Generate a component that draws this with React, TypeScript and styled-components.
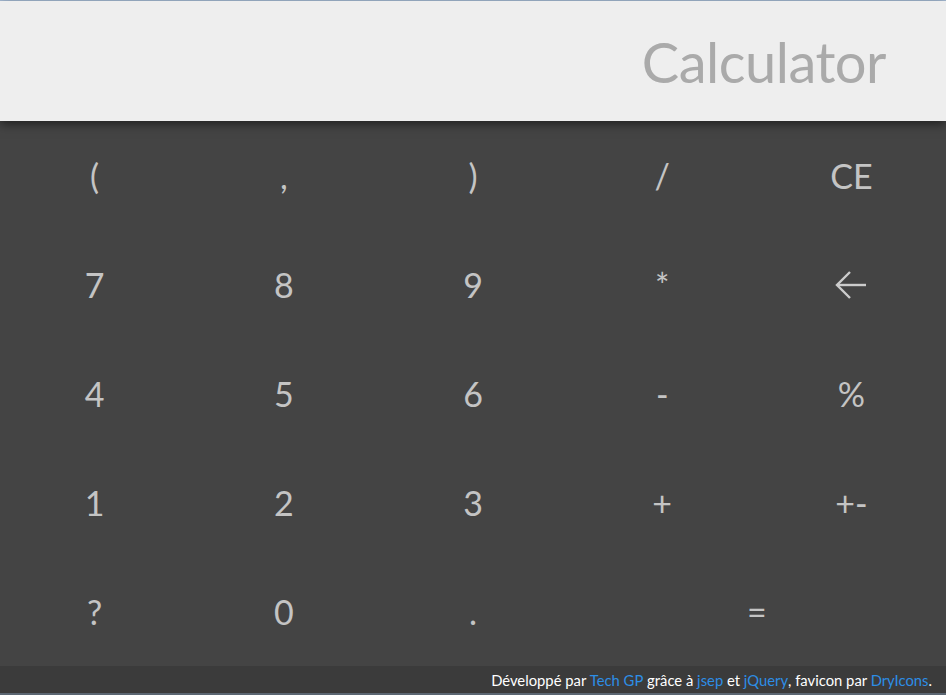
import React from "react";
import styled, { createGlobalStyle } from "styled-components";

const Global = createGlobalStyle`
  html, body { margin: 0; padding: 0; background: #444444; }
  body { font-family: Lato, "Open Sans", sans-serif; overflow: hidden; }
`;

const Page = styled.div`
  display: flex;
  flex-direction: column;
  width: 946px;
  height: 695px;
  border-top: 1px solid #a9bfd9;
  border-bottom: 2px solid #5b6672;
  box-sizing: border-box;
`;

const Header = styled.header`
  position: relative;
  z-index: 1;
  height: 120px;
  flex: none;
  background: #eeeeee;
  display: flex;
  align-items: center;
  justify-content: flex-end;
  padding-right: 60px;
  box-shadow: 0 3px 10px rgba(0, 0, 0, 0.55);
`;

const Title = styled.h1`
  margin: 0;
  font-family: Lato, sans-serif;
  font-weight: 400;
  font-size: 56px;
  color: #aaaaaa;
  letter-spacing: -0.5px;
  line-height: 1;
  padding-top: 2px;
`;

const Pad = styled.div`
  display: grid;
  grid-template-columns: repeat(5, 1fr);
  grid-template-rows: repeat(5, 109px);
  background: #444444;
  flex: none;
`;

const Key = styled.button<{ $span?: number }>`
  grid-column: span ${(p) => p.$span ?? 1};
  background: transparent;
  border: none;
  color: #c4c4c4;
  font-family: Lato, sans-serif;
  font-size: 34px;
  font-weight: 400;
  display: flex;
  align-items: center;
  justify-content: center;
  cursor: pointer;
  padding: 0;
`;

const Footer = styled.footer`
  flex: 1;
  background: #3b3b3b;
  display: flex;
  align-items: center;
  justify-content: flex-end;
  padding-right: 14px;
  font-family: Lato, sans-serif;
  font-size: 14.8px;
  color: #ffffff;
  padding-top: 1px;
  white-space: nowrap;
`;

const Link = styled.a`
  color: #2d8ee6;
  text-decoration: none;
`;

const Arrow = () => (
  <svg width="34" height="30" viewBox="0 0 34 30" fill="none" stroke="#cccccc" strokeWidth="2.4">
    <path d="M32 15H3" />
    <path d="M16 2L3 15L16 28" />
  </svg>
);

const keys: { label: React.ReactNode; span?: number }[] = [
  { label: "(" }, { label: "," }, { label: ")" }, { label: "/" }, { label: "CE" },
  { label: "7" }, { label: "8" }, { label: "9" }, { label: "*" }, { label: <Arrow /> },
  { label: "4" }, { label: "5" }, { label: "6" }, { label: "-" }, { label: "%" },
  { label: "1" }, { label: "2" }, { label: "3" }, { label: "+" }, { label: "+-" },
  { label: "?" }, { label: "0" }, { label: "." }, { label: "=", span: 2 },
];

export default function App() {
  return (
    <>
      <Global />
      <Page>
        <Header>
          <Title>Calculator</Title>
        </Header>
        <Pad>
          {keys.map((k, i) => (
            <Key key={i} $span={k.span}>{k.label}</Key>
          ))}
        </Pad>
        <Footer>
          Développé par&nbsp;<Link href="#">Tech GP</Link>&nbsp;grâce à&nbsp;<Link href="#">jsep</Link>&nbsp;et&nbsp;<Link href="#">jQuery</Link>, favicon par&nbsp;<Link href="#">DryIcons</Link>.
        </Footer>
      </Page>
    </>
  );
}
